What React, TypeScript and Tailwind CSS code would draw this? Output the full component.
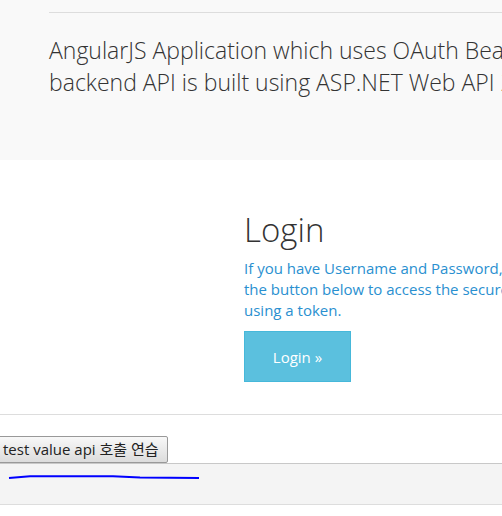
export default function App() {
  return (
    <div className="w-[502px] h-[516px] overflow-hidden bg-white text-[#333] font-['Open_Sans',sans-serif]">
      {/* jumbotron */}
      <div className="h-[160px] bg-[#f9f9f9] pl-[49px] pt-[12px]">
        <div className="border-t border-[#dddddd] w-[460px]" />
        <p className="mt-[22px] text-[23px] leading-[31.7px] font-light whitespace-nowrap">
          AngularJS Application which uses OAuth Bearer Token Authentication,
          <br />
          backend API is built using ASP.NET Web API 2.
        </p>
      </div>

      {/* login */}
      <div className="pl-[244px] pt-[50px]">
        <h2 className="text-[33px] leading-[40px] font-light">Login</h2>
        <p className="mt-[8px] text-[15px] leading-[21px] text-[#2a90d0] whitespace-nowrap">
          If you have Username and Password, click on
          <br />
          the button below to access the secured data
          <br />
          using a token.
        </p>
        <button className="mt-[10px] w-[107px] h-[51px] bg-[#5bc0de] border border-[#46b8da] text-white text-[15px] leading-[20px] flex items-center justify-center">
          Login »
        </button>
      </div>

      <div className="mt-[32px] border-t border-[#dddddd]" />

      <button className="mt-[21px] -ml-[4px] h-[27px] pl-[6px] pr-[8px] pb-[2px] border border-[#999] rounded-[2px] bg-gradient-to-b from-[#f8f8f8] to-[#dcdcdc] text-[15px] leading-[20px] text-[#222] font-['Open_Sans','Noto_Sans_CJK_KR',sans-serif] flex items-center">
        test value api 호출 연습
      </button>

      <div className="h-[42px] bg-[#f4f4f4] border-t border-b border-t-[#c8c8c8] border-b-[#dddddd]">
        <svg width="502" height="40" viewBox="0 463 502 40" className="block">
          <polyline
            points="9,477 30,475.3 113,475.3 140,476.6 199,477"
            fill="none"
            stroke="#0000ff"
            strokeWidth="2"
          />
        </svg>
      </div>
    </div>
  )
}
